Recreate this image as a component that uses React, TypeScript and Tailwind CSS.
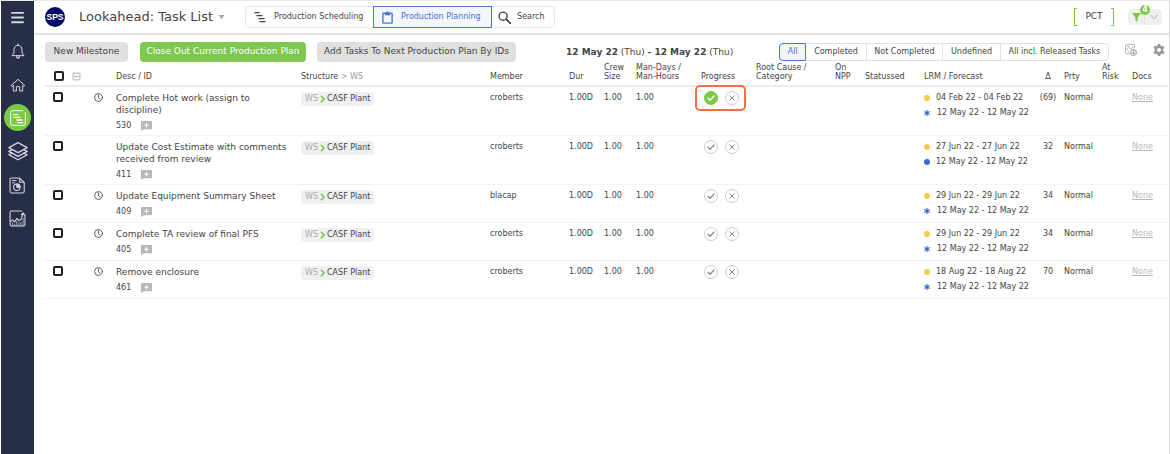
import { useState } from "react";
import type { ReactNode } from "react";
import clsx from "clsx";

interface Task {
  id: number;
  desc: string;
  member: string;
  clock: boolean;
  done: boolean;
  lrm: string;
  forecastMark: "star" | "dot";
  delta: string;
}

const FORECAST = "12 May 22 - 12 May 22";

const TASKS: Task[] = [
  { id: 530, desc: "Complete Hot work (assign to discipline)", member: "croberts", clock: true, done: true, lrm: "04 Feb 22 - 04 Feb 22", forecastMark: "star", delta: "(69)" },
  { id: 411, desc: "Update Cost Estimate with comments received from review", member: "croberts", clock: false, done: false, lrm: "27 Jun 22 - 27 Jun 22", forecastMark: "dot", delta: "32" },
  { id: 409, desc: "Update Equipment Summary Sheet", member: "blacap", clock: true, done: false, lrm: "29 Jun 22 - 29 Jun 22", forecastMark: "star", delta: "34" },
  { id: 405, desc: "Complete TA review of final PFS", member: "croberts", clock: true, done: false, lrm: "29 Jun 22 - 29 Jun 22", forecastMark: "star", delta: "34" },
  { id: 461, desc: "Remove enclosure", member: "croberts", clock: true, done: false, lrm: "18 Aug 22 - 18 Aug 22", forecastMark: "star", delta: "70" },
];

const FILTERS = ["All", "Completed", "Not Completed", "Undefined", "All incl. Released Tasks"];

function Icon({ className, children }: { className: string; children: ReactNode }) {
  return (
    <svg
      viewBox="0 0 24 24"
      className={className}
      fill="none"
      stroke="currentColor"
      strokeWidth={1.5}
      strokeLinecap="round"
      strokeLinejoin="round"
      aria-hidden="true"
    >
      {children}
    </svg>
  );
}

function Sidebar() {
  return (
    <nav className="ml-px flex w-[33px] shrink-0 flex-col items-center bg-[#272e48] text-[#d5d8e0]">
      <button aria-label="Menu" className="mt-[3px] flex h-[26px] w-full items-center justify-center">
        <Icon className="size-[15px]">
          <path d="M2 4.5h20M2 12h20M2 19.5h20" strokeWidth={3} strokeLinecap="butt" />
        </Icon>
      </button>
      <button aria-label="Notifications" className="mt-2 flex h-[26px] w-full items-center justify-center">
        <Icon className="size-4">
          <path d="M12 1.500v2M12 3.500c-4 0-6 3-6 6.500v5L3 19h18l-3-4v-5c0-3.500-2-6.500-6-6.500z" />
          <path d="M10 20.500a2 2 0 0 0 4 0" strokeWidth={2} />
        </Icon>
      </button>
      <button aria-label="Home" className="mt-2 flex h-[26px] w-full items-center justify-center">
        <Icon className="size-4">
          <path d="M2 12.500 12 3.500l10 9-1.500 1.500L19 12.500V21h-4.500v-6.500h-5V21H5v-8.500L3.500 14z" />
        </Icon>
      </button>
      <button aria-label="Lookahead" className="mt-[6px] flex size-[27px] items-center justify-center rounded-full bg-[#7ac943] text-white">
        <Icon className="size-4">
          <path d="M19 1H4a3 3 0 0 0-3 3v16a3 3 0 0 0 3 3h16a3 3 0 0 0 3-3V4" />
          <path d="M5 7h7M6 11h9M10 15h8M12 19h7" strokeWidth={2} />
        </Icon>
      </button>
      <button aria-label="Layers" className="mt-[7px] flex h-[26px] w-full items-center justify-center">
        <Icon className="size-5">
          <path d="M12 2 1 8l11 6 11-6z" />
          <path d="M5 10.500 1 12.500l11 6 11-6-4-2" />
          <path d="M5 14.500l-4 2 11 6 11-6-4-2" />
        </Icon>
      </button>
      <button aria-label="Reports" className="mt-2 flex h-[26px] w-full items-center justify-center">
        <Icon className="size-[17px]">
          <path d="M3 1.500h12l6.500 6V20a2.500 2.500 0 0 1-2.500 2.500H4A2.500 2.500 0 0 1 1.500 20V3A1.500 1.500 0 0 1 3 1.500z" />
          <path d="M15 2v5.500h6M5 5h5M5 8h3" />
          <circle cx="11" cy="14.500" r="4.500" />
          <path d="M11 14.500V10a4.500 4.500 0 0 1 4.500 4.500z" fill="currentColor" />
        </Icon>
      </button>
      <button aria-label="Analytics" className="mt-[7px] flex h-[26px] w-full items-center justify-center">
        <Icon className="size-[17px]">
          <path d="M18 1.500H3.500a2 2 0 0 0-2 2v17a2 2 0 0 0 2 2h17a2 2 0 0 0 2-2V7" />
          <path d="M2 16l3-2 3 3 3-5 3 3 3-2 3-8M17.500 6.500 20 4l2 3" />
          <path d="M5 18v4M8 20v2M11 16v6M14 18v4M17 17v5M20 12v10" strokeWidth={1} />
        </Icon>
      </button>
    </nav>
  );
}

function TopBar() {
  return (
    <header className="flex h-[34px] items-center border-b-2 border-[#e2e2e2] pr-[7px] pl-[11px]">
      <svg viewBox="0 0 40 40" className="size-5" role="img" aria-label="SPS">
        <circle cx="20" cy="20" r="20" fill="#000a64" />
        <text x="20" y="26" textAnchor="middle" fontSize="17" fontWeight="bold" fill="#fff" fontFamily="Liberation Sans">
          SPS
        </text>
      </svg>
      <h1 className="ml-[14px] text-[13px] text-[#444]">Lookahead: Task List</h1>
      <button aria-label="Switch view" className="ml-[5px] text-[#aaa]">
        <svg viewBox="0 0 8 5" className="h-[4px] w-[7px]" aria-hidden="true">
          <path d="M0 0h8L4 5z" fill="currentColor" />
        </svg>
      </button>

      <div className="ml-5 flex h-[22px] rounded-sm border border-[#e8e8e8] text-[8px] text-[#444]">
        <button className="flex w-[127px] items-center gap-2 pl-2">
          <Icon className="size-3">
            <path d="M1 3h10M5 9h12M9 15h12M11 21h12" strokeWidth={2.5} strokeLinecap="butt" />
          </Icon>
          <span className="whitespace-nowrap">Production Scheduling</span>
        </button>
        <button className="-my-px flex w-[119px] items-center gap-2 border border-[#4a76d4] bg-[#f4f6fc] pl-2 text-[#4272d2]">
          <svg viewBox="0 0 20 24" className="h-[13px] w-[11px]" fill="none" stroke="currentColor" strokeWidth={2.5} aria-hidden="true">
            <rect x="1.500" y="4" width="17" height="18.500" rx="1.500" />
            <path d="M5 3h3a2 2 0 0 1 4 0h3v5H5z" fill="currentColor" stroke="none" />
          </svg>
          <span className="whitespace-nowrap">Production Planning</span>
        </button>
        <button className="flex w-[62px] items-center gap-[6px] pl-[6px]">
          <Icon className="size-[13px]">
            <circle cx="9.500" cy="9.500" r="7.500" strokeWidth={2.5} />
            <path d="m15 15 8 8" strokeWidth={3} />
          </Icon>
          Search
        </button>
      </div>

      <button className="ml-auto flex h-[18px] w-10 items-center justify-between text-[9px] text-[#444]">
        <span className="h-full w-[3px] border-y border-l border-[#7ac943]" />
        PCT
        <span className="h-full w-[3px] border-y border-r border-[#7ac943]" />
      </button>
      <div className="relative ml-[14px] flex h-4 w-[34px] rounded-sm bg-[#f0f0f0]">
        <button aria-label="Filter" className="flex w-[17px] items-center justify-center border-r border-[#e2e2e2] text-[#7ac943]">
          <svg viewBox="0 0 16 16" className="size-[9px]" aria-hidden="true">
            <path d="M0 0h16l-6 8v8l-4-3V8z" fill="currentColor" />
          </svg>
        </button>
        <button aria-label="Filter options" className="flex flex-1 items-center justify-center text-[#aaa]">
          <Icon className="size-2">
            <path d="m2 7 10 10L22 7" strokeWidth={3} />
          </Icon>
        </button>
        <span className="absolute -top-1 left-3 flex size-[10px] items-center justify-center rounded-full bg-[#7ac943] text-[8px] leading-none font-bold text-white">
          4
        </span>
      </div>
    </header>
  );
}

function Toolbar() {
  const [filter, setFilter] = useState("All");

  return (
    <div className="flex h-[27px] items-end pr-1 pl-[11px] text-[9px] whitespace-nowrap text-[#444]">
      <button className="h-5 w-[83px] rounded-sm bg-[#e0e0e0]">New Milestone</button>
      <button className="ml-3 h-5 w-[166px] rounded-sm bg-[#7ec850] text-white">Close Out Current Production Plan</button>
      <button className="ml-[11px] h-5 w-[199px] rounded-sm bg-[#e0e0e0]">Add Tasks To Next Production Plan By IDs</button>
      <p className="ml-[50px] leading-5">
        <b>12 May 22</b> (Thu) <b>- 12 May 22</b> (Thu)
      </p>

      <div className="mb-px ml-auto flex h-[18px] w-[330px] rounded-sm border border-[#e2e2e2] text-[8px]">
        {FILTERS.map((name) => (
          <button
            key={name}
            onClick={() => setFilter(name)}
            className={clsx(
              "grow px-[6px]",
              filter === name
                ? "-my-px -ml-px rounded-l-sm border border-[#4a76d4] bg-[#f4f6fc] text-[#4272d2]"
                : "border-r border-[#e2e2e2] last:border-r-0"
            )}
          >
            {name}
          </button>
        ))}
      </div>
      <button aria-label="Export" className="mb-[6px] ml-4 text-[#999]">
        <Icon className="size-3">
          <path d="M9 19H3a2 2 0 0 1-2-2V3a2 2 0 0 1 2-2h14a2 2 0 0 1 2 2v5M4 5h4M4 9l3 6M8 7l4 4 4-6" />
          <circle cx="17" cy="17" r="6" strokeWidth={2} />
          <path d="M17 13v7m-3-3 3 3 3-3" strokeWidth={2} />
        </Icon>
      </button>
      <button aria-label="Settings" className="mb-[6px] ml-4 text-[#999]">
        <svg viewBox="0 0 24 24" className="size-3" aria-hidden="true">
          <path
            fill="currentColor"
            fillRule="evenodd"
            d="M9.500 0h5l.7 3.500 2 1.100L20.500 3.500 23 7.800l-2.600 2.300v3.800L23 16.200l-2.500 4.300-3.300-1.100-2 1.100-.7 3.500h-5l-.7-3.500-2-1.100-3.300 1.100L1 16.200l2.600-2.300v-3.800L1 7.800l2.500-4.300 3.300 1.100 2-1.100zM12 8a4 4 0 1 0 0 8 4 4 0 0 0 0-8z"
          />
        </svg>
      </button>
    </div>
  );
}

function CheckBox({ label }: { label: string }) {
  return (
    <input
      type="checkbox"
      aria-label={label}
      className="block size-[10px] appearance-none rounded-[2px] border-2 border-[#222] bg-white checked:bg-[#4272d2]"
    />
  );
}

function TaskRow({ task }: { task: Task }) {
  return (
    <tr className="h-[38px] border-b border-[#f3f3f3] align-top leading-3">
      <td className="pt-[5px] pl-[9px]">
        <CheckBox label={`Select task ${task.id}`} />
      </td>
      <td />
      <td className="pt-[6px] pl-[2px] text-[#555]">
        {task.clock && (
          <Icon className="size-[9px]">
            <circle cx="12" cy="12" r="10.500" strokeWidth={2.5} />
            <path d="M12 5v8l4 3" strokeWidth={2.5} />
          </Icon>
        )}
      </td>
      <td className="pt-[5px] pb-[3px]">
        <p className="pr-1 text-[9px]">{task.desc}</p>
        <p className="mt-1 flex items-center">
          <span className="w-[25px]">{task.id}</span>
          <button aria-label={`Add comment to ${task.id}`} className="text-[#b8b8b8]">
            <svg viewBox="0 0 20 18" className="h-[10px] w-[11px]" aria-hidden="true">
              <path d="M0 0h20v15H5l-5 3z" fill="currentColor" />
              <path d="M10 3.500v8M6 7.500h8" stroke="#fff" strokeWidth={2} />
            </svg>
          </button>
        </p>
      </td>
      <td className="pt-[5px]">
        <span className="flex h-[14px] w-fit items-center rounded-sm bg-[#f0f0f0] px-1 whitespace-nowrap">
          <span className="text-[#aaa]">WS</span>
          <svg viewBox="0 0 6 10" className="mx-[2px] h-2 w-[5px] text-[#7ac943]" fill="none" stroke="currentColor" strokeWidth={2} aria-hidden="true">
            <path d="m1 1 4 4-4 4" />
          </svg>
          CASF Plant
        </span>
      </td>
      <td className="pt-[5px]">{task.member}</td>
      <td className="pt-[5px]">1.00D</td>
      <td className="pt-[5px]">1.00</td>
      <td className="pt-[5px]">1.00</td>
      <td>
        {/* relative keeps the highlight above the header rule */}
        <div
          className={clsx(
            "relative -mt-[2px] -ml-[6px] flex w-[51px] gap-[7px] rounded-[5px] border-2 px-[7px] py-1",
            task.done ? "border-[#f2703f]" : "border-transparent"
          )}
        >
          <button
            aria-label="Complete"
            className={clsx(
              "flex size-[14px] shrink-0 items-center justify-center rounded-full border",
              task.done ? "border-[#7ac943] bg-[#7ac943] text-white" : "border-[#ccc] text-[#888]"
            )}
          >
            <Icon className="size-2">
              <path d="m3 13 6 6L21 6" strokeWidth={4} />
            </Icon>
          </button>
          <button aria-label="Not complete" className="flex size-[14px] shrink-0 items-center justify-center rounded-full border border-[#ccc] text-[#888]">
            <Icon className="size-[6px]">
              <path d="m3 3 18 18M21 3 3 21" strokeWidth={4} />
            </Icon>
          </button>
        </div>
      </td>
      <td />
      <td />
      <td />
      <td className="pt-[5px] whitespace-nowrap">
        <p className="flex items-center">
          <span className="mr-[6px] size-[6px] rounded-full bg-[#f9c846]" />
          {task.lrm}
        </p>
        <p className="mt-[3px] flex items-center">
          {task.forecastMark === "dot" ? (
            <span className="mr-[6px] size-[6px] rounded-full bg-[#3a68d0]" />
          ) : (
            <Icon className="mr-[7px] size-[6px] text-[#3a68d0]">
              <path d="M12 2v20M3 7l18 10M21 7 3 17" strokeWidth={5} />
            </Icon>
          )}
          {FORECAST}
        </p>
      </td>
      <td className="pt-[5px] pr-[4px] text-center">{task.delta}</td>
      <td className="pt-[5px]">Normal</td>
      <td />
      <td className="pt-[5px]">
        <a href="#" className="text-[#b8b8b8] underline">None</a>
      </td>
    </tr>
  );
}

function TaskTable() {
  return (
    <div className="pr-px pl-[10px]">
      <table className="w-full table-fixed border-collapse text-left text-[8px] text-[#444]">
        <colgroup>
          <col className="w-[28px]" />
          <col className="w-[20px]" />
          <col className="w-[24px]" />
          <col className="w-[185px]" />
          <col />
          <col className="w-[79px]" />
          <col className="w-[35px]" />
          <col className="w-[32px]" />
          <col className="w-[65px]" />
          <col className="w-[55px]" />
          <col className="w-[79px]" />
          <col className="w-[30px]" />
          <col className="w-[59px]" />
          <col className="w-[112px]" />
          <col className="w-[28px]" />
          <col className="w-[38px]" />
          <col className="w-[30px]" />
          <col className="w-[36px]" />
        </colgroup>
        <thead>
          <tr className="h-6 border-b-2 border-[#ececec] align-bottom leading-[9px] [&>th]:pb-[4px] [&>th]:font-normal">
            <th className="pl-[10px]">
              <CheckBox label="Select all tasks" />
            </th>
            <th>
              <button aria-label="Collapse all" className="block text-[#999]">
                <Icon className="size-[9px]">
                  <rect x="3" y="3" width="18" height="18" rx="2" strokeWidth={2} />
                  <path d="M7 12h10" strokeWidth={2} />
                </Icon>
              </button>
            </th>
            <th />
            <th>Desc / ID</th>
            <th>
              Structure <span className="text-[#999]">&gt; WS</span>
            </th>
            <th>Member</th>
            <th>Dur</th>
            <th>Crew<br />Size</th>
            <th className="whitespace-nowrap">Man-Days /<br />Man-Hours</th>
            <th>Progress</th>
            <th className="whitespace-nowrap">Root Cause /<br />Category</th>
            <th>On<br />NPP</th>
            <th>Statussed</th>
            <th>LRM / Forecast</th>
            <th className="pr-[4px] text-center">Δ</th>
            <th>Prty</th>
            <th>At<br />Risk</th>
            <th>Docs</th>
          </tr>
        </thead>
        <tbody>
          {TASKS.map((task) => (
            <TaskRow key={task.id} task={task} />
          ))}
        </tbody>
      </table>
    </div>
  );
}

export default function App() {
  return (
    <div className="flex min-h-screen border-t border-r border-t-[#e8e8e8] border-r-[#d8d8d8] bg-white font-['DejaVu_Sans',sans-serif]">
      <Sidebar />
      <main className="min-w-0 flex-1">
        <TopBar />
        <Toolbar />
        <TaskTable />
      </main>
    </div>
  );
}
